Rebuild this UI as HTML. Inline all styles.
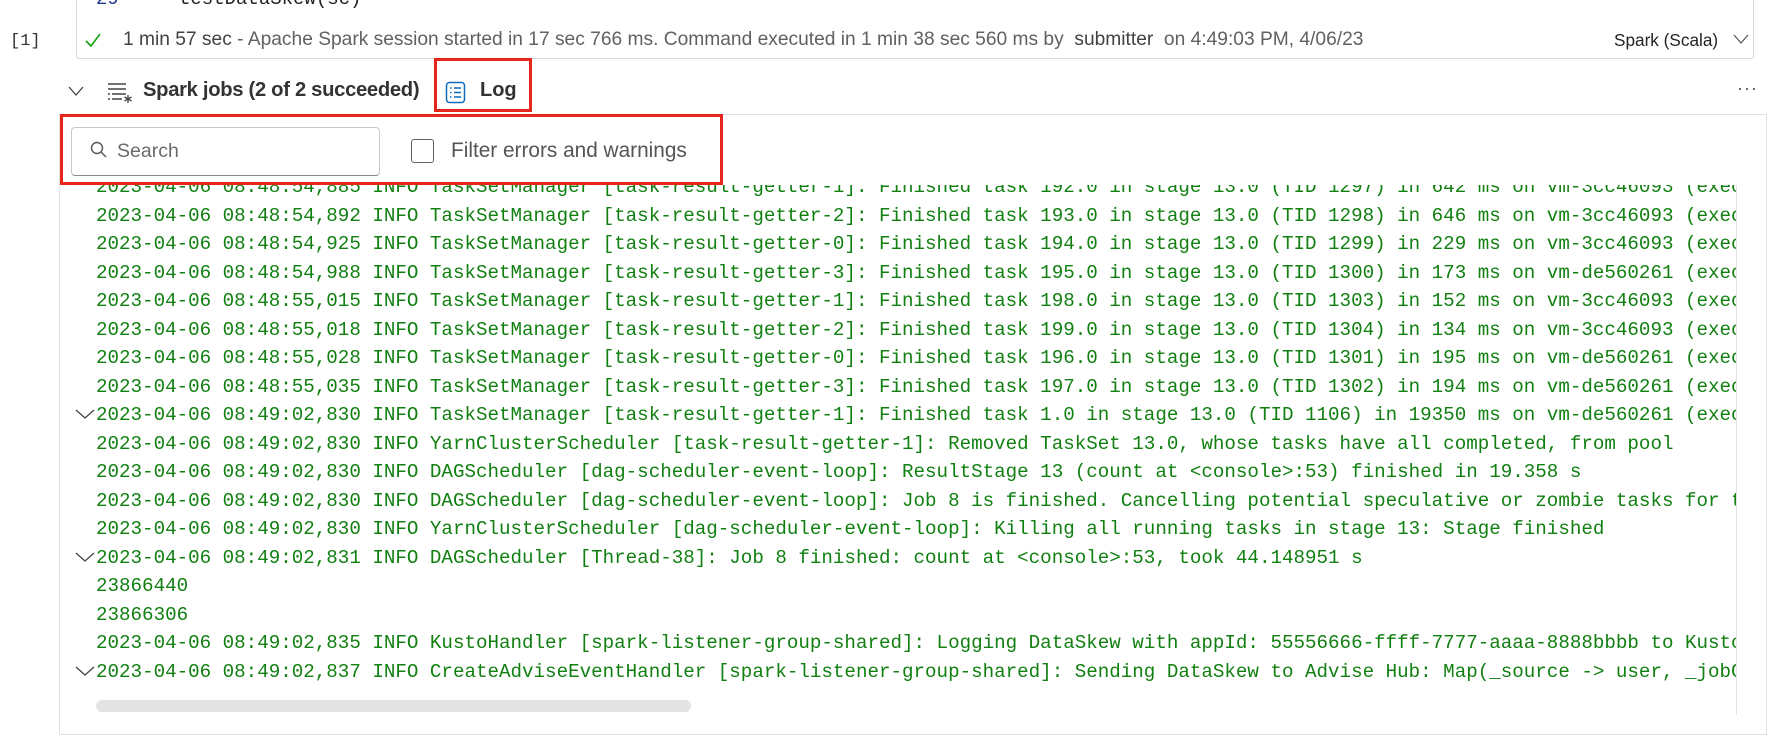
<!DOCTYPE html>
<html><head><meta charset="utf-8"><style>
*{margin:0;padding:0;box-sizing:border-box}
body{width:1776px;height:742px;background:#fff;position:relative;overflow:hidden;font-family:"Liberation Sans",sans-serif;color:#242424}
.a{position:absolute;white-space:nowrap}
.mono{font-family:"Liberation Mono",monospace}
#log{position:absolute;left:60px;top:185px;width:1676px;height:500px;overflow:hidden}
#log div{position:absolute;left:36px;height:28.55px;line-height:28.55px;font-family:"Liberation Mono",monospace;font-size:19.2px;color:#118011;white-space:nowrap}
</style></head><body>
<div class="a mono" style="left:96px;top:-12px;font-size:19px;color:#1f3a8a">29</div>
<div class="a mono" style="left:179px;top:-12px;font-size:19px;color:#222">testDataSkew(sc)</div>
<div style="position:absolute;left:76px;top:-2px;width:1678px;height:61px;border:1px solid #d6d6d6;border-top:none;border-radius:0 0 3px 3px"></div>
<div class="a mono" style="left:10px;top:32px;font-size:17px;color:#333">[1]</div>
<svg class="a" style="left:84px;top:31px" width="18" height="18" viewBox="0 0 18 18"><path d="M2 10l5 5L16 3" fill="none" stroke="#13a10e" stroke-width="1.6"/></svg>
<div class="a" style="left:123px;top:29px;font-size:19.2px;color:#424242">1 min 57 sec <span style="color:#616161">- Apache Spark session started in 17 sec 766 ms. Command executed in 1 min 38 sec 560 ms by &nbsp;</span>submitter <span style="color:#616161">&nbsp;on 4:49:03 PM, 4/06/23</span></div>
<div class="a" style="left:1614px;top:30px;font-size:17.2px;color:#242424">Spark (Scala)</div>
<svg class="a" style="left:1733px;top:33px" width="16" height="12" viewBox="0 0 16 12"><path d="M1 2l7 8 7-8" fill="none" stroke="#555" stroke-width="1.2"/></svg>

<svg class="a" style="left:68px;top:85px" width="16" height="12" viewBox="0 0 16 12"><path d="M1 2l7 8 7-8" fill="none" stroke="#444" stroke-width="1.3"/></svg>
<svg class="a" style="left:106px;top:81px" width="28" height="24" viewBox="0 0 28 24"><path d="M2 3h18M2 8h18M6 13h14M6 18h10M2 13h2M2 18h2" stroke="#444" stroke-width="1.4"/><path d="M22 14v8M18.5 16l7 4M25.5 16l-7 4" stroke="#444" stroke-width="1.3"/></svg>
<div class="a" style="left:143px;top:79px;font-size:20.2px;font-weight:bold;color:#333;letter-spacing:-0.3px">Spark jobs (2 of 2 succeeded)</div>
<svg class="a" style="left:445px;top:81px" width="22" height="24" viewBox="0 0 22 24"><rect x="1.5" y="1.5" width="18" height="20" rx="3" fill="none" stroke="#0f6cbd" stroke-width="1.5"/><path d="M5 7h1.5M5 11.5h1.5M5 16h1.5M9 7h7M9 11.5h7M9 16h7" stroke="#0f6cbd" stroke-width="1.4"/></svg>
<div class="a" style="left:480px;top:79px;font-size:20px;font-weight:bold;color:#333">Log</div>
<div style="position:absolute;left:434px;top:58px;width:98px;height:54px;border:3px solid #e8251c"></div>
<div class="a" style="left:1737px;top:78px;font-size:18px;color:#555;letter-spacing:1px">···</div>

<div style="position:absolute;left:59px;top:114px;width:1708px;height:621px;border:1px solid #e1e1e1"></div>
<div style="position:absolute;left:1736px;top:185px;width:1px;height:530px;background:#e1e1e1"></div>
<div style="position:absolute;left:71px;top:127px;width:309px;height:49px;border:1px solid #c8c8c8;border-bottom:1.5px solid #8a8a8a;border-radius:4px"></div>
<svg class="a" style="left:89px;top:140px" width="20" height="20" viewBox="0 0 20 20"><circle cx="8" cy="8" r="5.5" fill="none" stroke="#555" stroke-width="1.4"/><path d="M12 12l5 5" stroke="#555" stroke-width="1.4"/></svg>
<div class="a" style="left:117px;top:140px;font-size:19.5px;color:#6a6a6a">Search</div>
<div style="position:absolute;left:411px;top:139px;width:23px;height:24px;border:1.5px solid #616161;border-radius:3px"></div>
<div class="a" style="left:451px;top:139px;font-size:20.8px;color:#555">Filter errors and warnings</div>
<div style="position:absolute;left:60px;top:114px;width:663px;height:71px;border:3px solid #e8251c"></div>

<div id="log">
<div style="top:-12px">2023-04-06 08:48:54,885 INFO TaskSetManager [task-result-getter-1]: Finished task 192.0 in stage 13.0 (TID 1297) in 642 ms on vm-3cc46093 (exec</div>
<div style="top:16.5px">2023-04-06 08:48:54,892 INFO TaskSetManager [task-result-getter-2]: Finished task 193.0 in stage 13.0 (TID 1298) in 646 ms on vm-3cc46093 (exec</div>
<div style="top:45px">2023-04-06 08:48:54,925 INFO TaskSetManager [task-result-getter-0]: Finished task 194.0 in stage 13.0 (TID 1299) in 229 ms on vm-3cc46093 (exec</div>
<div style="top:73.5px">2023-04-06 08:48:54,988 INFO TaskSetManager [task-result-getter-3]: Finished task 195.0 in stage 13.0 (TID 1300) in 173 ms on vm-de560261 (exec</div>
<div style="top:102px">2023-04-06 08:48:55,015 INFO TaskSetManager [task-result-getter-1]: Finished task 198.0 in stage 13.0 (TID 1303) in 152 ms on vm-3cc46093 (exec</div>
<div style="top:130.5px">2023-04-06 08:48:55,018 INFO TaskSetManager [task-result-getter-2]: Finished task 199.0 in stage 13.0 (TID 1304) in 134 ms on vm-3cc46093 (exec</div>
<div style="top:159px">2023-04-06 08:48:55,028 INFO TaskSetManager [task-result-getter-0]: Finished task 196.0 in stage 13.0 (TID 1301) in 195 ms on vm-de560261 (exec</div>
<div style="top:187.5px">2023-04-06 08:48:55,035 INFO TaskSetManager [task-result-getter-3]: Finished task 197.0 in stage 13.0 (TID 1302) in 194 ms on vm-de560261 (exec</div>
<div style="top:216px">2023-04-06 08:49:02,830 INFO TaskSetManager [task-result-getter-1]: Finished task 1.0 in stage 13.0 (TID 1106) in 19350 ms on vm-de560261 (exec</div>
<div style="top:244.5px">2023-04-06 08:49:02,830 INFO YarnClusterScheduler [task-result-getter-1]: Removed TaskSet 13.0, whose tasks have all completed, from pool</div>
<div style="top:273px">2023-04-06 08:49:02,830 INFO DAGScheduler [dag-scheduler-event-loop]: ResultStage 13 (count at &lt;console&gt;:53) finished in 19.358 s</div>
<div style="top:301.5px">2023-04-06 08:49:02,830 INFO DAGScheduler [dag-scheduler-event-loop]: Job 8 is finished. Cancelling potential speculative or zombie tasks for t</div>
<div style="top:330px">2023-04-06 08:49:02,830 INFO YarnClusterScheduler [dag-scheduler-event-loop]: Killing all running tasks in stage 13: Stage finished</div>
<div style="top:358.5px">2023-04-06 08:49:02,831 INFO DAGScheduler [Thread-38]: Job 8 finished: count at &lt;console&gt;:53, took 44.148951 s</div>
<div style="top:387px">23866440</div>
<div style="top:415.5px">23866306</div>
<div style="top:444px">2023-04-06 08:49:02,835 INFO KustoHandler [spark-listener-group-shared]: Logging DataSkew with appId: 55556666-ffff-7777-aaaa-8888bbbb to Kusto:</div>
<div style="top:472.5px">2023-04-06 08:49:02,837 INFO CreateAdviseEventHandler [spark-listener-group-shared]: Sending DataSkew to Advise Hub: Map(_source -&gt; user, _jobG</div>
</div>
<svg class="a" style="left:75px;top:408px" width="20" height="12" viewBox="0 0 20 12"><path d="M1 2l9 8 9-8" fill="none" stroke="#444" stroke-width="1.3"/></svg>
<svg class="a" style="left:75px;top:551px" width="20" height="12" viewBox="0 0 20 12"><path d="M1 2l9 8 9-8" fill="none" stroke="#444" stroke-width="1.3"/></svg>
<svg class="a" style="left:75px;top:665px" width="20" height="12" viewBox="0 0 20 12"><path d="M1 2l9 8 9-8" fill="none" stroke="#444" stroke-width="1.3"/></svg>
<div style="position:absolute;left:96px;top:700px;width:595px;height:12px;background:#e3e3e3;border-radius:6px"></div>
</body></html>
